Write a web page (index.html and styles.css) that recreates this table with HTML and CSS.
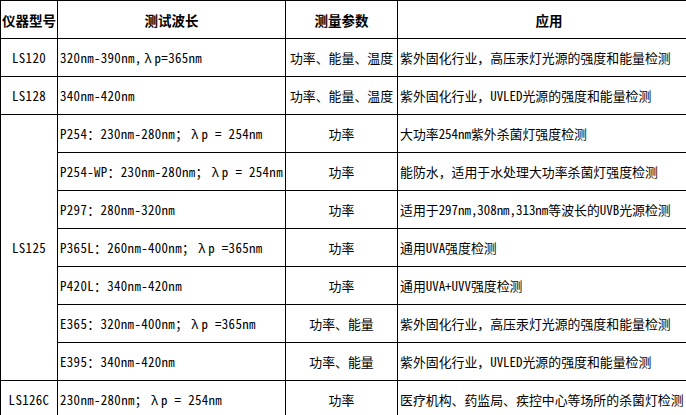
FILE: index.html
```html
<!DOCTYPE html>
<html lang="zh-CN">
<head>
<meta charset="utf-8">
<title>仪器型号</title>
<link rel="stylesheet" href="styles.css">
</head>
<body>
<div class="wrap">
<table class="spec">
  <colgroup>
    <col class="c1"><col class="c2"><col class="c3"><col class="c4">
  </colgroup>
  <thead>
    <tr>
      <th>仪器型号</th>
      <th>测试波长</th>
      <th>测量参数</th>
      <th>应用</th>
    </tr>
  </thead>
  <tbody>
    <tr>
      <td class="model">LS120</td>
      <td class="wave">320nm-390nm,<span class="lam">λ</span>p=365nm</td>
      <td class="param">功率、能量、温度</td>
      <td>紫外固化行业，高压汞灯光源的强度和能量检测</td>
    </tr>
    <tr>
      <td class="model">LS128</td>
      <td class="wave">340nm-420nm</td>
      <td class="param">功率、能量、温度</td>
      <td>紫外固化行业，UVLED光源的强度和能量检测</td>
    </tr>
    <tr>
      <td class="model" rowspan="7">LS125</td>
      <td class="wave">P254：230nm-280nm；<span class="lam">λ</span>p = 254nm</td>
      <td class="param">功率</td>
      <td>大功率254nm紫外杀菌灯强度检测</td>
    </tr>
    <tr>
      <td class="wave">P254-WP：230nm-280nm；<span class="lam">λ</span>p = 254nm</td>
      <td class="param">功率</td>
      <td>能防水，适用于水处理大功率杀菌灯强度检测</td>
    </tr>
    <tr>
      <td class="wave">P297：280nm-320nm</td>
      <td class="param">功率</td>
      <td>适用于297nm,308nm,313nm等波长的UVB光源检测</td>
    </tr>
    <tr>
      <td class="wave">P365L：260nm-400nm；<span class="lam">λ</span>p =365nm</td>
      <td class="param">功率</td>
      <td>通用UVA强度检测</td>
    </tr>
    <tr>
      <td class="wave">P420L：340nm-420nm</td>
      <td class="param">功率</td>
      <td>通用UVA+UVV强度检测</td>
    </tr>
    <tr>
      <td class="wave">E365：320nm-400nm；<span class="lam">λ</span>p =365nm</td>
      <td class="param">功率、能量</td>
      <td>紫外固化行业，高压汞灯光源的强度和能量检测</td>
    </tr>
    <tr>
      <td class="wave">E395：340nm-420nm</td>
      <td class="param">功率、能量</td>
      <td>紫外固化行业，UVLED光源的强度和能量检测</td>
    </tr>
    <tr>
      <td class="model">LS126C</td>
      <td class="wave">230nm-280nm；<span class="lam">λ</span>p = 254nm</td>
      <td class="param">功率</td>
      <td>医疗机构、药监局、疾控中心等场所的杀菌灯检测</td>
    </tr>
  </tbody>
</table>
</div>
</body>
</html>
```
FILE: styles.css
```css
html, body {
  margin: 0;
  padding: 0;
  background: #fff;
}
.wrap {
  width: 686px;
  height: 415px;
  overflow: hidden;
}
.spec {
  border-collapse: collapse;
  table-layout: fixed;
  width: 700px;
  font-family: "Noto Sans Mono CJK SC", "Noto Sans CJK SC", sans-serif;
  font-size: 12.9px;
  color: #000;
}
.c1 { width: 57px; }
.c2 { width: 228px; }
.c3 { width: 112px; }
.c4 { width: 303px; }
.spec th,
.spec td {
  border: 1px solid #000;
  height: 37px;
  padding: 0 0 0 2px;
  white-space: nowrap;
  overflow: hidden;
  vertical-align: middle;
  line-height: 16px;
}
.spec th {
  font-family: "Noto Sans CJK SC", sans-serif;
  font-weight: 700;
  font-size: 13.5px;
  text-align: center;
  padding: 0;
}
.spec td.model,
.spec td.param {
  text-align: center;
  padding: 0;
}
.spec td.model,
.spec td.wave {
  letter-spacing: 0.35px;
}
.lam {
  display: inline-block;
  width: 13px;
  text-align: center;
  letter-spacing: 0;
}
```
